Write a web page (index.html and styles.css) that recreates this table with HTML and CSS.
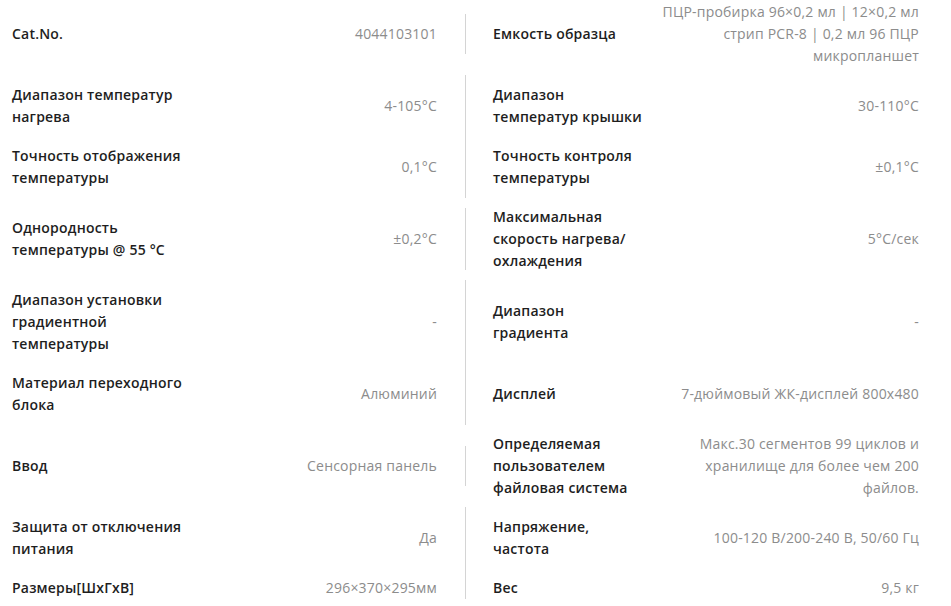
FILE: index.html
```html
<!DOCTYPE html>
<html lang="ru">
<head>
<meta charset="utf-8">
<title>Specs</title>
<link rel="stylesheet" href="styles.css">
</head>
<body>
<div class="specs">
  <div class="row">
    <div class="cell left"><div class="label">Cat.No.</div><div class="value">4044103101</div></div>
    <div class="cell right"><div class="label">Емкость образца</div><div class="value">ПЦР-пробирка 96×0,2 мл | 12×0,2 мл стрип PCR-8 | 0,2 мл 96 ПЦР микропланшет</div></div>
  </div>
  <div class="row">
    <div class="cell left"><div class="label">Диапазон температур нагрева</div><div class="value">4-105°C</div></div>
    <div class="cell right"><div class="label">Диапазон температур крышки</div><div class="value">30-110°C</div></div>
  </div>
  <div class="row">
    <div class="cell left"><div class="label">Точность отображения температуры</div><div class="value">0,1°C</div></div>
    <div class="cell right"><div class="label">Точность контроля температуры</div><div class="value">±0,1°C</div></div>
  </div>
  <div class="row">
    <div class="cell left"><div class="label">Однородность температуры @ 55 °C</div><div class="value">±0,2°C</div></div>
    <div class="cell right"><div class="label">Максимальная скорость нагрева/охлаждения</div><div class="value">5°C/сек</div></div>
  </div>
  <div class="row">
    <div class="cell left"><div class="label">Диапазон установки градиентной температуры</div><div class="value">-</div></div>
    <div class="cell right"><div class="label">Диапазон градиента</div><div class="value">-</div></div>
  </div>
  <div class="row">
    <div class="cell left"><div class="label">Материал переходного блока</div><div class="value">Алюминий</div></div>
    <div class="cell right"><div class="label">Дисплей</div><div class="value">7-дюймовый ЖК-дисплей 800x480</div></div>
  </div>
  <div class="row">
    <div class="cell left"><div class="label">Ввод</div><div class="value">Сенсорная панель</div></div>
    <div class="cell right"><div class="label">Определяемая пользователем файловая система</div><div class="value">Макс.30 сегментов 99 циклов и хранилище для более чем 200 файлов.</div></div>
  </div>
  <div class="row">
    <div class="cell left"><div class="label">Защита от отключения питания</div><div class="value">Да</div></div>
    <div class="cell right"><div class="label">Напряжение, частота</div><div class="value">100-120 В/200-240 В, 50/60 Гц</div></div>
  </div>
  <div class="row">
    <div class="cell left"><div class="label">Размеры[ШxГxВ]</div><div class="value">296×370×295мм</div></div>
    <div class="cell right"><div class="label">Вес</div><div class="value">9,5 кг</div></div>
  </div>
</div>
</body>
</html>
```

FILE: styles.css
```css
html, body {
  margin: 0;
  padding: 0;
  background: #fff;
  overflow: hidden;
}

body {
  font-family: "Open Sans", "Noto Sans", sans-serif;
  font-size: 14px;
  line-height: 22px;
  letter-spacing: 0.2px;
  color: #222;
}

.specs {
  display: flex;
  flex-direction: column;
  gap: 17px;
  padding-top: 1px;
}

.row {
  display: grid;
  grid-template-columns: 466px 1fr;
  align-items: center;
}

.cell {
  display: flex;
  align-items: center;
  gap: 10px;
}

.left {
  padding: 9px 28px 9px 12px;
  margin: -9px 0;
  border-right: 1px solid #d4d4d4;
}

.right {
  padding: 0 32px 0 27px;
}

.label {
  font-weight: 600;
  color: #1e1e1e;
}

.left .label {
  flex: 0 0 190px;
}

.right .label {
  flex: 0 0 150px;
}

.value {
  flex: 1 1 auto;
  text-align: right;
  color: #8c8c8c;
}
```
